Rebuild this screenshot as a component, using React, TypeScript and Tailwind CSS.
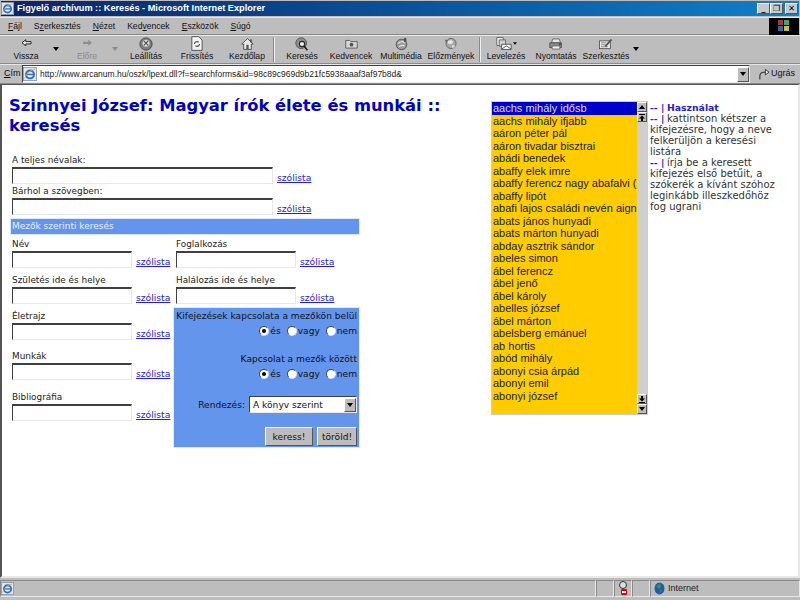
import type { ReactNode } from "react";

const names = [
  "aachs mihály idősb", "aachs mihály ifjabb", "aáron péter pál", "aáron tivadar bisztrai",
  "abádi benedek", "abaffy elek imre", "abaffy ferencz nagy abafalvi (", "abaffy lipót",
  "abafi lajos családi nevén aigner", "abats jános hunyadi", "abats márton hunyadi", "abday asztrik sándor",
  "abeles simon", "ábel ferencz", "ábel jenő", "ábel károly", "abelles józsef", "ábel márton",
  "abelsberg emánuel", "ab hortis", "abód mihály", "abonyi csia árpád", "abonyi emil", "abonyi józsef",
];

const sunken = "border border-t-[#404040] border-l-[#404040] border-r-[#e8e8e8] border-b-[#e8e8e8]";
const soft = "border border-t-[#8a8a8a] border-l-[#8a8a8a] border-r-[#e8e8e8] border-b-[#e8e8e8]";
const raised = "border border-t-white border-l-white border-r-[#555] border-b-[#555]";

function Caret({ light }: { light?: boolean }) {
  return (
    <svg width="6" height="4" viewBox="0 0 6 4">
      <path d="M0 0h6L3 4z" fill={light ? "#8a8a8a" : "#000"} />
    </svg>
  );
}

function ToolButton({ w, label, icon, dim }: { w: string; label: string; icon: ReactNode; dim?: boolean }) {
  return (
    <div className={`flex flex-col items-center shrink-0 ${w}`}>
      <div className="h-[15px] flex items-center justify-center">{icon}</div>
      <span className={`text-[8.600px] leading-[11px] whitespace-nowrap ${dim ? "text-[#8a8a8a]" : "text-[#111]"}`}>{label}</span>
    </div>
  );
}

function Back() {
  return (
    <svg width="11" height="9" viewBox="0 0 14 12">
      <path d="M6 1 1 5l5 4V6.500h7v-3H6z" fill="#f5f5f5" stroke="#111" strokeWidth="1.200" />
    </svg>
  );
}

function Forward() {
  return (
    <svg width="11" height="9" viewBox="0 0 14 12">
      <path d="M8 1l5 4-5 4V6.500H1v-3h7z" fill="#8e8e8e" />
    </svg>
  );
}

function Stop() {
  return (
    <svg width="14" height="14" viewBox="0 0 16 16">
      <circle cx="8" cy="8" r="7" fill="#7d7d7d" stroke="#444" />
      <circle cx="8" cy="7" r="4" fill="#d8d8d8" />
      <path d="M5.500 4.500l5 5m0-5l-5 5" stroke="#555" strokeWidth="1.400" />
    </svg>
  );
}

function Refresh() {
  return (
    <svg width="12" height="15" viewBox="0 0 14 17">
      <path d="M1 .5h8l4 4v12H1z" fill="#f4f4f4" stroke="#444" />
      <path d="M4 9a3 3 0 0 1 5-2M10 9a3 3 0 0 1-5 2" fill="none" stroke="#555" strokeWidth="1.400" />
    </svg>
  );
}

function Home() {
  return (
    <svg width="13" height="14" viewBox="0 0 17 16">
      <path d="M8.500 1 1 8h2.500v7h10V8H16z" fill="#e8e8e8" stroke="#333" />
      <rect x="7" y="9" width="3" height="6" fill="#555" />
      <rect x="12" y="2" width="2" height="4" fill="#444" />
    </svg>
  );
}

function Search() {
  return (
    <svg width="14" height="14" viewBox="0 0 17 17">
      <circle cx="7.500" cy="7.500" r="6.500" fill="#8f8f8f" stroke="#444" />
      <circle cx="8.500" cy="8.500" r="3.200" fill="#eee" stroke="#222" strokeWidth="1.300" />
      <path d="M11 11l4 5" stroke="#222" strokeWidth="2" />
    </svg>
  );
}

function Favorites() {
  return (
    <svg width="13" height="11" viewBox="0 0 17 14">
      <path d="M1 3h5l1.500 1.500H16V13H1z" fill="#d8d8d8" stroke="#444" />
      <circle cx="8.500" cy="8.500" r="2.500" fill="#555" />
    </svg>
  );
}

function Media() {
  return (
    <svg width="13" height="14" viewBox="0 0 16 17">
      <circle cx="8" cy="9" r="6.500" fill="#9a9a9a" stroke="#444" />
      <path d="M4 8c2-3 6-3 8-1M5 12c2-2 5-2 7-1" stroke="#e8e8e8" strokeWidth="1.300" fill="none" />
      <path d="M11 1h3v5h-3z" fill="#555" />
    </svg>
  );
}

function History() {
  return (
    <svg width="14" height="13" viewBox="0 0 18 16">
      <circle cx="9" cy="8" r="6.500" fill="#a8a8a8" stroke="#555" />
      <path d="M5 5c3-2 6-1 7 1l-3 3-4-1zM10 11l3-1 1 2-3 2z" fill="#e6e6e6" />
      <path d="M1 3l4 1-2 3z" fill="#666" />
    </svg>
  );
}

function Mail() {
  return (
    <div className="flex items-center gap-[1px]">
      <svg width="16" height="13" viewBox="0 0 20 16">
        <path d="M1 .5h8v10H1z" fill="#ececec" stroke="#555" />
        <path d="M4 3.500h8v8H4z" fill="#cfcfcf" stroke="#555" />
        <path d="M7 9h12v6.500H7zM7 15l6-4 6 4" fill="#f2f2f2" stroke="#444" />
      </svg>
      <svg width="4" height="3" viewBox="0 0 6 4">
        <path d="M0 0h6L3 4z" fill="#000" />
      </svg>
    </div>
  );
}

function Print() {
  return (
    <svg width="14" height="12" viewBox="0 0 18 15">
      <path d="M5 1h8l2 5H3z" fill="#e4e4e4" stroke="#555" />
      <path d="M1 6h15v6H1z" fill="#8c8c8c" stroke="#444" />
      <path d="M4 10h10v4H4z" fill="#f0f0f0" stroke="#555" />
      <circle cx="14" cy="8" r="1" fill="#222" />
    </svg>
  );
}

function Edit() {
  return (
    <svg width="14" height="12" viewBox="0 0 18 15">
      <rect x=".5" y="3.500" width="14" height="10" fill="#ededed" stroke="#444" />
      <path d="M2.500 6h7M2.500 8.500h6M2.500 11h9" stroke="#777" />
      <path d="M7 10 15 1l2 1.500L9 11.500z" fill="#555" />
    </svg>
  );
}

function IeLogo({ size }: { size: number }) {
  return (
    <svg width={size} height={size} viewBox="0 0 16 16">
      <rect x=".5" y=".5" width="15" height="15" fill="#dfe7f2" stroke="#8899b0" />
      <circle cx="8" cy="8.500" r="4.500" fill="none" stroke="#2a6fd0" strokeWidth="2.200" />
      <path d="M4 8.500h8" stroke="#2a6fd0" strokeWidth="1.600" />
      <path d="M2 13C4 7 9 3 14 2.500" fill="none" stroke="#e3a52d" strokeWidth="1" />
    </svg>
  );
}

function ScrollButton({ children }: { children: ReactNode }) {
  return <div className={`h-[10px] w-[10px] bg-[#bdbdbd] flex items-center justify-center ${raised}`}>{children}</div>;
}

function Up() {
  return (
    <svg width="6" height="4" viewBox="0 0 6 4">
      <path d="M0 4h6L3 0z" fill="#000" />
    </svg>
  );
}

function Down() {
  return (
    <svg width="6" height="4" viewBox="0 0 6 4">
      <path d="M0 0h6L3 4z" fill="#000" />
    </svg>
  );
}

function UpBar() {
  return (
    <svg width="6" height="7" viewBox="0 0 6 7">
      <path d="M0 0h6v1H0zM0 4.500h6L3 1.500zM2 4.500h2V7H2z" fill="#000" />
    </svg>
  );
}

function DownBar() {
  return (
    <svg width="6" height="7" viewBox="0 0 6 7">
      <path d="M0 6h6v1H0zM0 2.500h6L3 5.500zM2 0h2v2.500H2z" fill="#000" />
    </svg>
  );
}

function Field({ label, wide, h }: { label: string; wide?: boolean; h: string }) {
  return (
    <div className={h}>
      <div className="h-[12px] text-[8.900px] leading-[11px] text-[#222] ml-[2px] whitespace-nowrap">{label}</div>
      <div className="flex items-end">
        <div className={`ml-[2px] h-[17px] bg-white ${sunken} border-t-2 ${wide ? "w-[261px]" : "w-[120px]"}`} />
        <a className="ml-[4px] text-[9.200px] leading-[12px] text-[#2222dd] underline">szólista</a>
      </div>
    </div>
  );
}

function Radios() {
  return (
    <div className="flex justify-end items-center gap-[6px] h-[12px]">
      {["és", "vagy", "nem"].map((t, i) => (
        <div key={t} className="flex items-center gap-[1px]">
          <span className="w-[10px] h-[10px] rounded-full bg-white border border-t-[#444] border-l-[#444] border-r-[#ddd] border-b-[#ddd] flex items-center justify-center">
            {i === 0 && <span className="w-[4px] h-[4px] rounded-full bg-black" />}
          </span>
          <span>{t}</span>
        </div>
      ))}
    </div>
  );
}

export default function App() {
  return (
    <div className="w-[800px] h-[600px] overflow-hidden bg-[#bdbdbd] flex flex-col font-['DejaVu_Sans',sans-serif]">
      {/* title bar */}
      <div className="h-[15px] mt-[1px] mx-[1px] flex items-center bg-gradient-to-r from-[#0a246a] to-[#1080c8]">
        <IeLogo size={13} />
        <span className="ml-[3px] text-[9.200px] font-bold text-white font-['Liberation_Sans',sans-serif] whitespace-nowrap">Figyelő archívum :: Keresés - Microsoft Internet Explorer</span>
        <div className="ml-auto flex items-center mr-[1px]">
          {["_", "❐", "✕"].map((c, i) => (
            <div key={c} className={`w-[13px] h-[11px] bg-[#c8c8c8] text-[8px] leading-[9px] text-center text-black font-bold ${raised} ${i === 2 ? "ml-[2px]" : ""}`}>{c}</div>
          ))}
        </div>
      </div>

      {/* menu */}
      <div className="h-[18px] mt-[1px] border-t border-[#e8e8e8] border-b border-b-[#8a8a8a] flex items-center relative text-[8.600px] text-[#111] font-['Liberation_Sans',sans-serif]">
        <div className="flex pl-[8px] gap-[12px]">
          <span><u>F</u>ájl</span>
          <span>S<u>z</u>erkesztés</span>
          <span><u>N</u>ézet</span>
          <span>Ked<u>v</u>encek</span>
          <span><u>E</u>szközök</span>
          <span><u>S</u>úgó</span>
        </div>
        <div className="ml-auto mr-[1px] w-[30px] h-[17px] bg-black flex items-center justify-center">
          <svg width="12" height="12" viewBox="0 0 12 12">
            <rect width="5" height="5" fill="#a33" />
            <rect x="6" width="5" height="5" fill="#3a7" />
            <rect y="6" width="5" height="5" fill="#36a" />
            <rect x="6" y="6" width="5" height="5" fill="#cb3" />
          </svg>
        </div>
      </div>

      {/* toolbar */}
      <div className="h-[29px] border-t border-[#e8e8e8] border-b border-b-[#8a8a8a] flex items-start font-['Liberation_Sans',sans-serif]">
        <div className="w-[8px] shrink-0" />
        <ToolButton w="w-[36px]" label="Vissza" icon={<Back />} />
        <div className="w-[26px] shrink-0 pt-[11px] pl-[9px]"><Caret /></div>
        <ToolButton w="w-[34px]" label="Előre" dim icon={<Forward />} />
        <div className="w-[26px] shrink-0 pt-[11px] pl-[8px]"><Caret light /></div>
        <ToolButton w="w-[32px]" label="Leállítás" icon={<Stop />} />
        <ToolButton w="w-[70px]" label="Frissítés" icon={<Refresh />} />
        <ToolButton w="w-[30px]" label="Kezdőlap" icon={<Home />} />
        <div className="ml-[11px] mt-[1px] w-[2px] h-[25px] border-l border-[#8a8a8a] border-r border-r-[#eee] shrink-0" />
        <ToolButton w="w-[54px]" label="Keresés" icon={<Search />} />
        <ToolButton w="w-[44px]" label="Kedvencek" icon={<Favorites />} />
        <ToolButton w="w-[56px]" label="Multimédia" icon={<Media />} />
        <ToolButton w="w-[44px]" label="Előzmények" icon={<History />} />
        <div className="ml-[6px] mt-[1px] w-[2px] h-[25px] border-l border-[#8a8a8a] border-r border-r-[#eee] shrink-0" />
        <ToolButton w="w-[50px]" label="Levelezés" icon={<Mail />} />
        <ToolButton w="w-[50px]" label="Nyomtatás" icon={<Print />} />
        <ToolButton w="w-[50px]" label="Szerkesztés" icon={<Edit />} />
        <div className="ml-[2px] pt-[11px]"><Caret /></div>
      </div>

      {/* address bar */}
      <div className="h-[20px] border-t border-[#e8e8e8] border-b border-b-[#8a8a8a] flex items-center font-['Liberation_Sans',sans-serif] text-[9px] text-[#111]">
        <span className="ml-[4px] w-[18px]"><u>C</u>ím</span>
        <div className={`w-[728px] h-[18px] bg-white flex items-center ${sunken}`}>
          <IeLogo size={14} />
          <span className="ml-[3px] text-[8.500px] text-[#222] whitespace-nowrap overflow-hidden">http://www.arcanum.hu/oszk/lpext.dll?f=searchforms&amp;id=98c89c969d9b21fc5938aaaf3af97b8d&amp;</span>
          <div className={`ml-auto w-[12px] h-[15px] bg-[#bdbdbd] flex items-center justify-center ${raised}`}><Down /></div>
        </div>
        <div className="ml-[8px] flex items-center">
          <svg width="12" height="13" viewBox="0 0 13 13">
            <path d="M2 12V8a4 4 0 0 1 4-4h3" fill="none" stroke="#333" strokeWidth="1.200" />
            <path d="M8 1l4 3-4 3z" fill="#e8e8e8" stroke="#333" />
          </svg>
          <span className="ml-[1px]">Ugrás</span>
        </div>
      </div>

      {/* page */}
      <div className="h-[494px] bg-white border-l-2 border-[#555] border-t border-t-[#555] border-r-2 border-r-[#e8e8e8] border-b-2 border-b-[#e8e8e8] flex overflow-hidden">
        <div className="w-[489px] shrink-0 pl-[8px] pt-[11px]">
          <h1 className="ml-[-1px] w-[450px] text-[16.350px] leading-[20px] font-bold text-[#0000cc]">Szinnyei József: Magyar írók élete és munkái :: keresés</h1>
          <div className="mt-[19px] w-[350px]">
            <Field wide label="A teljes névalak:" h="h-[31px]" />
            <Field wide label="Bárhol a szövegben:" h="h-[31px]" />
            <div className="h-[17px] mt-[1px] bg-[#6495ed] text-[9px] leading-[15px] text-[#e8eefc] pl-[1px] border border-[#dfe8fb]">Mezők szerinti keresés</div>
            <div className="grid grid-cols-[164px_186px] mt-[4px]">
              <div>
                <Field label="Név" h="h-[36px]" />
                <Field label="Születés ide és helye" h="h-[36px]" />
                <Field label="Életrajz" h="h-[40px]" />
                <Field label="Munkák" h="h-[41px]" />
                <Field label="Bibliográfia" h="h-[41px]" />
              </div>
              <div>
                <Field label="Foglalkozás" h="h-[36px]" />
                <Field label="Halálozás ide és helye" h="h-[32px]" />
                <div className="ml-[-1px] h-[141px] w-[187px] bg-[#6495ed] border border-[#e2e9fa] pr-[2px] pl-[1px] pt-[2px] text-[9.100px] leading-[12px] text-[#111]">
                  <div className="text-right whitespace-nowrap">Kifejezések kapcsolata a mezőkön belül</div>
                  <div className="mt-[3px]"><Radios /></div>
                  <div className="text-right mt-[16px]">Kapcsolat a mezők között</div>
                  <div className="mt-[3px]"><Radios /></div>
                  <div className="flex justify-end items-center mt-[16px] gap-[4px]">
                    <span>Rendezés:</span>
                    <div className={`w-[108px] h-[17px] bg-white flex items-center pl-[3px] ${sunken}`}>
                      A könyv szerint
                      <div className={`ml-auto w-[12px] h-[14px] bg-[#bdbdbd] flex items-center justify-center ${raised}`}><Down /></div>
                    </div>
                  </div>
                  <div className="flex justify-end gap-[4px] mt-[14px]">
                    <button className={`w-[48px] h-[19px] bg-[#bdbdbd] text-[9.100px] text-[#111] ${raised}`}>keress!</button>
                    <button className={`w-[40px] h-[19px] bg-[#bdbdbd] text-[9.100px] text-[#111] ${raised}`}>töröld!</button>
                  </div>
                </div>
              </div>
            </div>
          </div>
        </div>

        {/* word list */}
        <div className="w-[157px] h-[314px] mt-[16px] shrink-0 flex border border-[#ccc] overflow-hidden">
          <div className="flex-1 min-w-0 overflow-hidden bg-[#ffcc00] font-['Liberation_Sans',sans-serif] text-[11px] leading-[12.500px] text-[#222]">
            {names.map((n, i) => (
              <div key={n} className={`h-[12.500px] pl-[1px] whitespace-nowrap overflow-hidden ${i === 0 ? "bg-[#0000cc] text-[#dde]" : ""}`}>{n}</div>
            ))}
          </div>
          <div className="w-[10px] shrink-0 bg-[#cfcfcf] flex flex-col">
            <ScrollButton><Up /></ScrollButton>
            <ScrollButton><UpBar /></ScrollButton>
            <div className="flex-1" />
            <ScrollButton><DownBar /></ScrollButton>
            <ScrollButton><Down /></ScrollButton>
          </div>
        </div>

        {/* help */}
        <div className="ml-[2px] w-[137px] pt-[17px] text-[10px] leading-[11px] text-[#333]">
          <div className="flex text-[9.300px] font-bold text-[#2222cc]"><span className="w-[17px] shrink-0">-- |</span><span>Használat</span></div>
          <div><span className="inline-block w-[17px] text-[9.300px] font-bold text-[#2222cc]">-- |</span>kattintson kétszer a kifejezésre, hogy a neve felkerüljön a keresési listára</div>
          <div><span className="inline-block w-[17px] text-[9.300px] font-bold text-[#2222cc]">-- |</span>írja be a keresett kifejezés első betűit, a szókerék a kívánt szóhoz leginkább illeszkedőhöz fog ugrani</div>
        </div>
      </div>

      {/* status bar */}
      <div className="h-[17px] mt-[2px] flex items-center font-['Liberation_Sans',sans-serif] text-[9px] text-[#222]">
        <div className={`w-[596px] h-[17px] flex items-center ${soft}`}><IeLogo size={13} /></div>
        <div className={`w-[18px] h-[17px] ${soft}`} />
        <div className={`w-[18px] h-[17px] flex items-center justify-center ${soft}`}>
          <svg width="11" height="15" viewBox="0 0 11 15">
            <circle cx="5" cy="4" r="3.500" fill="#ddd" stroke="#333" />
            <rect x="3" y="8" width="6" height="6" rx="1" fill="#e00" />
            <rect x="4" y="10" width="4" height="2" fill="#fff" />
          </svg>
        </div>
        <div className={`w-[18px] h-[17px] ${soft}`} />
        <div className={`flex-1 h-[17px] flex items-center pl-[3px] ${soft}`}>
          <svg width="11" height="13" viewBox="0 0 11 13">
            <ellipse cx="5.500" cy="6.500" rx="5" ry="6" fill="#1d5fa8" />
            <path d="M3 3l3-1 1 3-2 2-2-2zM6 8l2 0-1 3z" fill="#3c9a3c" />
          </svg>
          <span className="ml-[3px]">Internet</span>
        </div>
      </div>
    </div>
  );
}
